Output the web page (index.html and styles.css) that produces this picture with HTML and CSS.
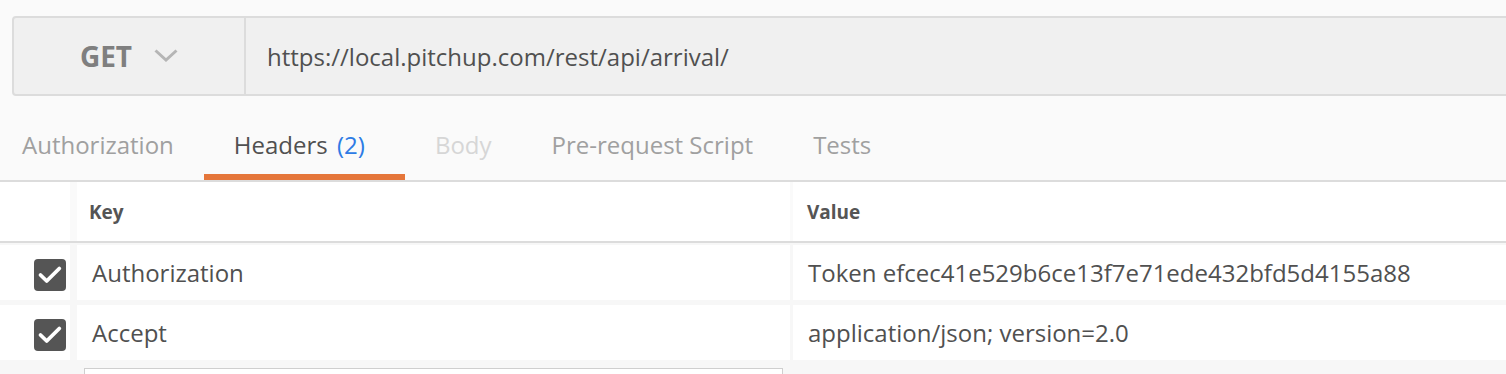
FILE: index.html
```html
<!DOCTYPE html>
<html lang="en">
<head>
    <meta charset="UTF-8">
    <meta name="viewport" content="width=device-width, initial-scale=1.0">
    <title>Request Headers</title>
    <link rel="stylesheet" href="styles.css">
</head>
<body>
    <div class="request-bar">
        <div class="method">
            <span>GET</span>
            <svg class="chevron" width="24" height="13" viewBox="0 0 24 13">
                <path d="M1.5 1.5 L12 11 L22.5 1.5" fill="none" stroke="#b5b5b5" stroke-width="3"/>
            </svg>
        </div>
        <div class="url">https://local.pitchup.com/rest/api/arrival/</div>
    </div>

    <div class="tabs">
        <div class="tab first">Authorization</div>
        <div class="tab active">Headers <span class="count">(2)</span></div>
        <div class="tab disabled">Body</div>
        <div class="tab">Pre-request Script</div>
        <div class="tab">Tests</div>
    </div>

    <div class="headers-table">
        <div class="row head">
            <div class="cell check"></div>
            <div class="cell key">Key</div>
            <div class="cell value">Value</div>
        </div>
        <div class="body">
            <div class="row">
                <div class="cell check">
                    <span class="checkbox">
                        <svg width="32" height="32" viewBox="0 0 32 32">
                            <path d="M6.5 16 L12.7 22 L25.3 9.5" fill="none" stroke="#fff" stroke-width="3.8" stroke-linecap="round" stroke-linejoin="round"/>
                        </svg>
                    </span>
                </div>
                <div class="cell key">Authorization</div>
                <div class="cell value">Token efcec41e529b6ce13f7e71ede432bfd5d4155a88</div>
            </div>
            <div class="row">
                <div class="cell check">
                    <span class="checkbox">
                        <svg width="32" height="32" viewBox="0 0 32 32">
                            <path d="M6.5 16 L12.7 22 L25.3 9.5" fill="none" stroke="#fff" stroke-width="3.8" stroke-linecap="round" stroke-linejoin="round"/>
                        </svg>
                    </span>
                </div>
                <div class="cell key">Accept</div>
                <div class="cell value">application/json; version=2.0</div>
            </div>
            <div class="new-row">
                <div class="new-key"></div>
            </div>
        </div>
    </div>
</body>
</html>
```

FILE: styles.css
```css
body {
    margin: 0;
    background-color: #fafafa;
    font-family: "Open Sans", "Liberation Sans", sans-serif;
    color: #505050;
    overflow: hidden;
}

.request-bar {
    display: flex;
    height: 76px;
    margin: 16px -20px 0 12px;
    border: 2px solid #dcdcdc;
    border-radius: 4px;
    background-color: #f0f0f0;
}
.method {
    width: 230px;
    display: flex;
    align-items: center;
    justify-content: center;
    gap: 22px;
    border-right: 2px solid #dcdcdc;
    font-size: 28px;
    font-weight: 700;
    color: #7f7f7f;
}
.chevron {
    margin-top: -2px;
}
.url {
    display: flex;
    align-items: center;
    padding-left: 21px;
    font-size: 24px;
    color: #505050;
}

.tabs {
    display: flex;
    padding-top: 20px;
    border-bottom: 2px solid #dcdcdc;
}
.tab {
    height: 58px;
    line-height: 58px;
    padding: 0 30px;
    border-bottom: 6px solid transparent;
    font-size: 24px;
    color: #a0a0a0;
    white-space: nowrap;
}
.tab.first {
    padding-left: 22px;
}
.tab.active {
    color: #505050;
    border-bottom-color: #e5763a;
}
.tab.disabled {
    color: #d6d6d6;
}
.count {
    margin: 0 10px 0 3px;
    color: #2d7be5;
}

.row {
    display: grid;
    grid-template-columns: 70px 720px 1fr;
}
.cell {
    display: flex;
    align-items: center;
    background-color: #fff;
}
.cell.key {
    margin-left: 7px;
    padding-left: 15px;
}
.cell.value {
    margin-left: 3px;
    padding-left: 15px;
}
.head {
    height: 59px;
    border-bottom: 2px solid #dcdcdc;
}
.head .cell {
    font-size: 19px;
    font-weight: 700;
    color: #555;
}
.head .cell.key {
    padding-left: 12px;
}
.head .cell.value {
    padding-left: 14px;
}

.body {
    display: flex;
    flex-direction: column;
    gap: 5px;
    padding-top: 2px;
    background-color: #f7f7f7;
}
.body .row {
    flex: none;
    height: 55px;
    font-size: 24px;
    color: #505050;
}
.cell.check {
    justify-content: flex-end;
    padding-right: 4px;
    padding-top: 4px;
}
.checkbox {
    width: 32px;
    height: 32px;
    border-radius: 4px;
    background-color: #555;
}
.checkbox svg {
    display: block;
}

/* empty row for a new header, cut off by the window */
.new-row {
    flex: none;
    height: 8px;
    padding: 3px 0 0 84px;
    overflow: hidden;
}
.new-key {
    width: 697px;
    height: 30px;
    border: 1px solid #cfcfcf;
    background-color: #fff;
}
```
